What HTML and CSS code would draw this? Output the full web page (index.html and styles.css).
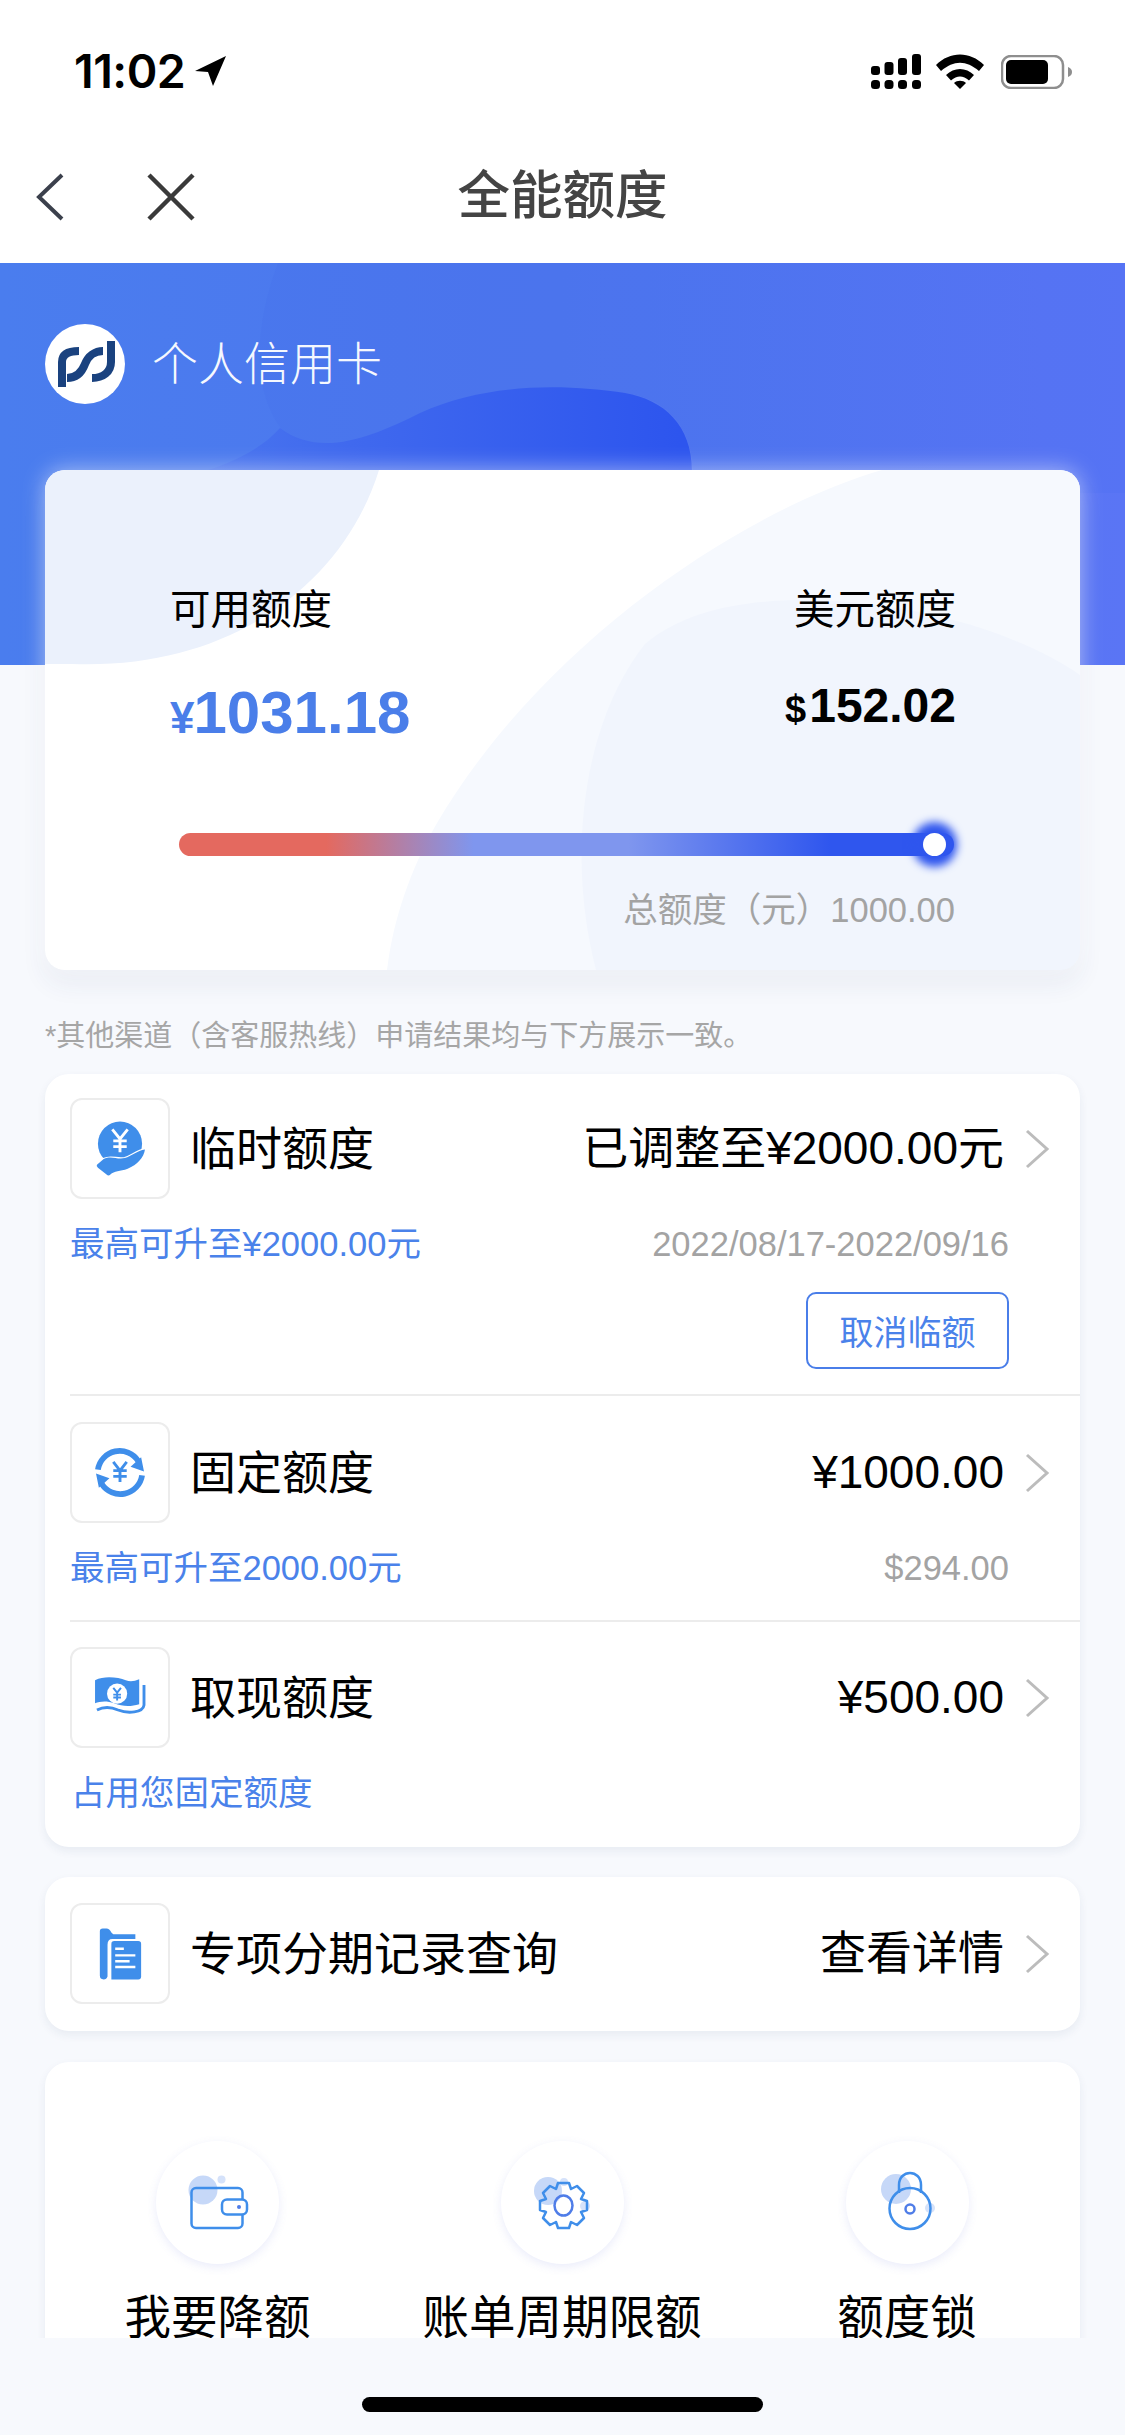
FILE: index.html
```html
<!DOCTYPE html>
<html lang="zh-CN">
<head>
<meta charset="utf-8">
<title>全能额度</title>
<link rel="stylesheet" href="styles.css">
</head>
<body>
<div class="phone">
  <header class="topbar">
    <div class="status">
      <div class="clock"><span>11:02</span>
        <svg class="loc" viewBox="0 0 31 30"><path d="M31 0 L0 15 L13 16 L18 30 Z" fill="#000"/></svg>
      </div>
      <div class="status-icons">
        <svg class="signal" viewBox="0 0 50 35" fill="#000">
          <rect x="0" y="12" width="9" height="9" rx="3"/><rect x="13.5" y="8" width="9" height="13" rx="3"/><rect x="27" y="4" width="9" height="17" rx="3"/><rect x="41" y="0" width="9" height="21" rx="3"/>
          <rect x="0" y="26" width="9" height="9" rx="3.5"/><rect x="13.5" y="26" width="9" height="9" rx="3.5"/><rect x="27" y="26" width="9" height="9" rx="3.5"/><rect x="41" y="26" width="9" height="9" rx="3.5"/>
        </svg>
        <svg class="wifi" viewBox="0 0 48 35" fill="#000">
          <path d="M0 11 C14 -3 34 -3 48 11 L43 17 C30 6 18 6 5 17 Z"/><path d="M10 21 C18 13 30 13 38 21 L33 26.500 C27 21 21 21 15 26.500 Z"/><path d="M18 29 C21 26 27 26 30 29 L24 35 Z"/>
        </svg>
        <svg class="battery" viewBox="0 0 71 34">
          <rect x="1" y="1" width="61" height="32" rx="9" fill="none" stroke="#8e8e8e" stroke-width="2.500"/>
          <rect x="5" y="5" width="42" height="24" rx="5" fill="#000"/>
          <path d="M67 12 C70 13 71 15 71 17 C71 19 70 21 67 22 Z" fill="#8e8e8e"/>
        </svg>
      </div>
    </div>
    <nav class="nav">
      <svg class="nav-back" viewBox="0 0 28 48"><path d="M26 2 L3 24 L26 46" fill="none" stroke="#3b404c" stroke-width="4"/></svg>
      <svg class="nav-close" viewBox="0 0 48 48"><path d="M2 2 L46 46 M46 2 L2 46" fill="none" stroke="#3a3a3a" stroke-width="4.500"/></svg>
      <h1 class="nav-title">全能额度</h1>
    </nav>
  </header>

  <main class="scroll">
    <section class="hero">
      <svg class="hero-waves" viewBox="0 0 1125 402" preserveAspectRatio="none">
        <defs>
          <linearGradient id="wave" gradientUnits="userSpaceOnUse" x1="80" x2="680" y1="0" y2="0">
            <stop offset="0" stop-color="#4670ee" stop-opacity="0"/>
            <stop offset=".45" stop-color="#4069ee"/>
            <stop offset="1" stop-color="#2d55ee"/>
          </linearGradient>
        </defs>
        <path d="M278 0 C255 60 250 130 285 170 C320 195 370 175 420 150 C490 118 570 125 625 130 C670 135 700 170 692 230 L1125 230 L1125 0 Z" fill="#3f60ee" fill-opacity=".1"/>
        <path d="M60 230 C150 225 240 210 280 165 C320 195 370 175 420 150 C490 118 570 122 625 130 C670 138 700 170 690 230 Z" fill="url(#wave)"/>
      </svg>
      <div class="brand">
        <span class="logo">
          <svg viewBox="0 0 80 80">
            <g fill="none" stroke="#1a427f" stroke-width="8">
              <path d="M17 63 V38 C17 30 24 27 34 27"/>
              <path d="M22 54 C32 54 37 48 40 40 C43 32 50 27 58 27"/>
              <path d="M66 17 V38 C66 48 58 54 47 54"/>
            </g>
          </svg>
        </span>
        <span class="brand-name">个人信用卡</span>
      </div>
      <div class="limit-card">
        <svg class="limit-bg" viewBox="0 0 1035 500">
          <path d="M0 0 H334 C300 110 190 200 27 194 H0 Z" fill="#ebf1fc"/>
          <path d="M837 0 C700 40 500 170 392 353 C365 400 348 450 342 500 H1035 V0 Z" fill="#f6f9fe"/>
          <path d="M551 500 C520 380 540 250 600 174 C640 140 700 130 760 130 C860 130 970 160 1035 205 V500 Z" fill="#f1f5fd"/>
        </svg>
        <div class="limit-top">
          <div class="limit-col">
            <span class="limit-label">可用额度</span>
            <span class="limit-cny"><small>¥</small>1031.18</span>
          </div>
          <div class="limit-col limit-col-right">
            <span class="limit-label">美元额度</span>
            <span class="limit-usd"><small>$</small>152.02</span>
          </div>
        </div>
        <div class="slider"><span class="knob"></span></div>
        <p class="limit-total">总额度（元）1000.00</p>
      </div>
    </section>

    <p class="note">*其他渠道（含客服热线）申请结果均与下方展示一致。</p>

    <section class="panel">
      <div class="row">
        <div class="row-main">
          <span class="icon-box">
            <svg viewBox="0 0 100 100">
              <circle cx="50" cy="45" r="23" fill="#3f8eea"/>
              <path d="M42 30 L50 40 L58 30 M50 40 V54 M43 42 H57 M43 48 H57" fill="none" stroke="#fff" stroke-width="3"/>
              <path d="M26 67 L33 61 C41 57 47 62 55 60 C62 58 68 52 76 51 C75 59 68 67 58 71 C50 74 44 73 40 77 Q38 79 36 77 L27 70 Q25 68 26 67 Z" fill="#3f8eea" stroke="#fff" stroke-width="2.500" paint-order="stroke"/>
            </svg>
          </span>
          <span class="row-title">临时额度</span>
          <span class="row-value">已调整至¥2000.00元</span>
          <svg class="chev" viewBox="0 0 26 40"><path d="M3 2 L23 20 L3 38" fill="none" stroke="#bcbcbc" stroke-width="3"/></svg>
        </div>
        <div class="row-sub"><span class="sub-blue">最高可升至¥2000.00元</span><span class="sub-gray">2022/08/17-2022/09/16</span></div>
        <div class="row-action"><button class="btn-outline" type="button">取消临额</button></div>
      </div>
      <div class="row row-mid">
        <div class="row-main">
          <span class="icon-box">
            <svg viewBox="0 0 100 100">
              <g fill="none" stroke="#3f8eea" stroke-width="6">
                <path d="M27 47 A23 23 0 0 1 69 38"/>
                <path d="M73 53 A23 23 0 0 1 31 62"/>
              </g>
              <path d="M61 44 L75 49 L72 34 Z M39 56 L25 51 L28 66 Z" fill="#3f8eea"/>
              <path d="M43 39 L50 48 L57 39 M50 48 V60 M43 48 H57 M43 54 H57" fill="none" stroke="#3f8eea" stroke-width="3"/>
            </svg>
          </span>
          <span class="row-title">固定额度</span>
          <span class="row-value">¥1000.00</span>
          <svg class="chev" viewBox="0 0 26 40"><path d="M3 2 L23 20 L3 38" fill="none" stroke="#bcbcbc" stroke-width="3"/></svg>
        </div>
        <div class="row-sub"><span class="sub-blue">最高可升至2000.00元</span><span class="sub-gray">$294.00</span></div>
      </div>
      <div class="row row-last">
        <div class="row-main">
          <span class="icon-box">
            <svg viewBox="0 0 100 100">
              <path d="M24 32 C34 27 48 29 56 32 C61 34 65 33 70 31 V57 C60 60 52 59 44 56 C36 53 29 54 24 56 Z" fill="#3f8eea"/>
              <circle cx="47" cy="46" r="10.500" fill="#fff"/>
              <path d="M43 40 L47 45 L51 40 M47 45 V53 M43 47 H51 M43 50 H51" fill="none" stroke="#3f8eea" stroke-width="2"/>
              <path d="M26 63 C34 59 41 60 48 63 C58 67 74 66 75 58 V37" fill="none" stroke="#3f8eea" stroke-width="3"/>
            </svg>
          </span>
          <span class="row-title">取现额度</span>
          <span class="row-value">¥500.00</span>
          <svg class="chev" viewBox="0 0 26 40"><path d="M3 2 L23 20 L3 38" fill="none" stroke="#bcbcbc" stroke-width="3"/></svg>
        </div>
        <div class="row-sub row-sub-inset"><span class="sub-blue">占用您固定额度</span></div>
      </div>
    </section>

    <section class="panel panel-single">
      <div class="row-main">
        <span class="icon-box">
          <svg viewBox="0 0 100 100">
            <path d="M29 27 Q29 24 32 24 H36 Q39 24 41 28 L43 30 H66 V35 H42 Q37 35 37 41 V74 Q36 77 33 77 Q29 77 29 73 Z" fill="#3f8eea"/>
            <path d="M41 40 Q41 37 44 37 H69 Q72 37 72 40 V74 Q72 77 69 77 H41 Z" fill="#3f8eea"/>
            <path d="M45 45 H54 M45 52 H66 M45 58 H60 M45 64 H66" stroke="#fff" stroke-width="2.500" fill="none"/>
          </svg>
        </span>
        <span class="row-title">专项分期记录查询</span>
        <span class="row-value">查看详情</span>
        <svg class="chev" viewBox="0 0 26 40"><path d="M3 2 L23 20 L3 38" fill="none" stroke="#bcbcbc" stroke-width="3"/></svg>
      </div>
    </section>

    <section class="panel panel-tools">
      <div class="tool">
        <span class="tool-circle">
          <svg viewBox="0 0 123 123">
            <circle cx="47" cy="49" r="14.500" fill="#c6d8f8"/><circle cx="65.500" cy="38.500" r="4" fill="#d5e2fa"/>
            <rect x="35.500" y="47" width="51" height="40" rx="4.500" fill="none" stroke="#3f8eea" stroke-width="2.500"/>
            <rect x="66" y="58.500" width="25" height="15" rx="5" fill="#fff" stroke="#3f8eea" stroke-width="2.500"/>
            <circle cx="83" cy="66" r="2" fill="#4f7de8"/>
          </svg>
        </span>
        <span class="tool-name">我要降额</span>
      </div>
      <div class="tool">
        <span class="tool-circle">
          <svg viewBox="0 0 123 123">
            <circle cx="47" cy="50" r="14" fill="#c6d8f8"/><circle cx="63" cy="41" r="4" fill="#d5e2fa"/><circle cx="84" cy="65" r="5" fill="#d5e2fa"/>
            <path d="M57 42 L68 42 L70 48 L76 45 L83 52 L80 58 L86 60 L86 69 L80 71 L83 77 L76 84 L70 81 L68 87 L57 87 L55 81 L49 84 L42 77 L45 71 L39 69 L39 60 L45 58 L42 52 L49 45 L55 48 Z" fill="none" stroke="#3f8eea" stroke-width="2.500" stroke-linejoin="round"/>
            <ellipse cx="62.500" cy="64.500" rx="9" ry="10" fill="none" stroke="#4f7de8" stroke-width="2.500"/>
          </svg>
        </span>
        <span class="tool-name">账单周期限额</span>
      </div>
      <div class="tool">
        <span class="tool-circle">
          <svg viewBox="0 0 123 123">
            <circle cx="50" cy="48" r="15" fill="#c6d8f8"/><circle cx="84" cy="67" r="5" fill="#d5e2fa"/>
            <path d="M53 52 V44 C53 28 75 28 75 44 V52" fill="none" stroke="#3f8eea" stroke-width="2.500"/>
            <circle cx="64" cy="67.500" r="20.500" fill="none" stroke="#3f8eea" stroke-width="2.500"/>
            <circle cx="64" cy="68" r="4.500" fill="none" stroke="#4f7de8" stroke-width="2.500"/>
          </svg>
        </span>
        <span class="tool-name">额度锁</span>
      </div>
    </section>
  </main>

  <footer class="home"><span class="home-bar"></span></footer>
</div>
</body>
</html>
```
FILE: styles.css
```css
* { box-sizing: border-box; }
html, body { margin: 0; padding: 0; }
body {
  width: 1125px;
  height: 2435px;
  overflow: hidden;
  font-family: "Liberation Sans", "Noto Sans CJK SC", sans-serif;
  background: #f7f9fd;
  color: #000;
}
svg { display: block; }
.phone { width: 1125px; height: 2435px; display: flex; flex-direction: column; }

/* top */
.topbar { height: 263px; background: #fff; flex: none; }
.status {
  height: 134px;
  padding: 49px 53px 0 74px;
  display: flex;
  justify-content: space-between;
  align-items: flex-start;
}
.clock { display: flex; align-items: center; gap: 10px; height: 44px; font-family: Inter, "Liberation Sans", sans-serif; font-size: 46.500px; font-weight: 600; letter-spacing: -.5px; line-height: 44px; }
.loc { width: 31px; height: 30px; }
.status-icons { display: flex; align-items: center; gap: 15px; padding-top: 5px; }
.signal { width: 50px; height: 35px; }
.wifi { width: 48px; height: 35px; }
.battery { width: 71px; height: 34px; margin-left: 2px; }

.nav { height: 129px; position: relative; display: flex; align-items: center; padding: 0 0 4px 36px; }
.nav-back { width: 28px; height: 48px; }
.nav-close { width: 48px; height: 48px; margin-left: 83px; }
.nav-title {
  position: absolute;
  left: 0; right: 0; top: 32px;
  margin: 0;
  text-align: center;
  font-size: 52.500px;
  line-height: 60px;
  font-weight: 500;
  color: #444;
}

/* scroll region */
.scroll { height: 2075px; flex: none; overflow: hidden; }

/* hero */
.hero {
  position: relative;
  height: 707px;
  padding: 60px 45px 0;
  background: linear-gradient(90deg, #4a7dee 0%, #4d76ee 50%, #5a75f5 100%) no-repeat 0 0 / 100% 402px;
}
.hero-waves { position: absolute; left: 0; top: 0; width: 1125px; height: 402px; }
.brand { position: relative; display: flex; align-items: center; gap: 27px; height: 81px; }
.logo { width: 80px; height: 80px; border-radius: 50%; background: #fff; display: block; }
.logo svg { width: 80px; height: 80px; }
.brand-name { color: #fff; font-size: 46px; font-weight: 300; line-height: 60px; opacity: .95; }

.limit-card {
  position: relative;
  margin-top: 66px;
  height: 500px;
  border-radius: 20px;
  overflow: hidden;
  background: #fff;
}
.hero::after {
  content: "";
  position: absolute;
  left: 45px; top: 207px;
  width: 1035px; height: 500px;
  border-radius: 20px;
  box-shadow: 0 0 22px rgba(255,255,255,.55), 0 14px 26px rgba(40,60,110,.07);
  pointer-events: none;
}
.limit-bg { position: absolute; left: 0; top: 0; width: 1035px; height: 500px; }
.limit-top {
  position: relative;
  display: flex;
  justify-content: space-between;
  padding: 115px 124px 0 125px;
  height: 363px;
}
.limit-col { display: flex; flex-direction: column; }
.limit-col-right { align-items: flex-end; }
.limit-label { font-size: 40.500px; line-height: 50px; }
.limit-cny { margin-top: 43px; font-size: 60px; line-height: 70px; font-weight: 700; color: #4a7ee9; white-space: nowrap; }
.limit-cny small { font-size: 44px; margin-right: -1px; }
.limit-usd { margin-top: 41px; font-size: 48px; line-height: 60px; font-weight: 700; white-space: nowrap; }
.limit-usd small { font-size: 38px; margin-right: 3px; }

.slider {
  position: relative;
  margin: 0 126px 0 134px;
  height: 23px;
  border-radius: 12px;
  background: linear-gradient(90deg, #e4695f 0%, #e4695f 19%, #7f96ee 38%, #7f96ee 58%, #2f56ee 84%, #2f56ee 100%);
}
.knob {
  position: absolute;
  right: 8px; top: 0;
  width: 23px; height: 23px;
  border-radius: 50%;
  background: #fff;
  box-shadow: 0 0 8px 11px #2f56ee;
}
.limit-total { position: relative; margin: 32px 125px 0 0; text-align: right; font-size: 34.500px; line-height: 44px; color: #a3a3a3; }

.note { margin: 46px 0 0; padding: 0 0 0 45px; height: 40px; font-size: 29px; line-height: 40px; color: #a6a6a6; }

/* panels */
.panel {
  margin: 18px 45px 0;
  background: #fff;
  border-radius: 24px;
  box-shadow: 0 4px 10px rgba(30,50,100,.07);
}
.panel-single { margin-top: 30px; padding: 26px 0 27px; }
.row { padding: 24px 0 0; border-bottom: 2px solid #ececec; margin-left: 25px; margin-right: 0; }
.row .row-main { padding-left: 0; }
.row-mid { padding: 26px 0 31px; }
.row-last { padding: 25px 0 33px; border-bottom: 0; }
.row-main { display: flex; align-items: center; height: 101px; padding: 0 30px 0 25px; }
.row .row-main { padding-right: 30px; }
.icon-box {
  width: 100px; height: 101px;
  flex: none;
  border: 2px solid #ececec;
  border-radius: 12px;
  display: block;
}
.icon-box svg { width: 96px; height: 97px; }
.row-title { margin-left: 20px; font-size: 46px; line-height: 60px; }
.row-value { margin-left: auto; margin-bottom: 2px; font-size: 46px; line-height: 60px; }
.chev { width: 26px; height: 40px; margin-left: 20px; flex: none; }
.row-sub { display: flex; justify-content: space-between; margin-top: 25px; padding-right: 71px; height: 40px; font-size: 34.500px; line-height: 40px; }
.row-mid .row-sub, .row-last .row-sub { margin-bottom: 1px; }
.row-sub-inset { padding-left: 1px; }
.sub-blue { color: #4a82ea; }
.sub-gray { color: #a3a3a3; }
.row-action { display: flex; justify-content: flex-end; margin-top: 28px; padding: 0 71px 25px 0; }
.btn-outline {
  width: 203px; height: 77px;
  background: #fff;
  border: 2px solid #4a7ee9;
  border-radius: 10px;
  color: #4a82ea;
  font: inherit;
  font-size: 34px;
  padding: 0;
}

.panel-tools {
  margin-top: 31px;
  height: 320px;
  display: grid;
  grid-template-columns: 345px 344px 346px;
  padding-top: 79px;
  justify-items: center;
  align-items: start;
  border-radius: 24px;
}
.tool { display: flex; flex-direction: column; align-items: center; }
.tool-circle {
  width: 123px; height: 123px;
  border-radius: 50%;
  background: #fff;
  box-shadow: 0 3px 10px rgba(90,110,220,.13);
  display: block;
}
.tool-circle svg { width: 123px; height: 123px; }
.tool-name { margin-top: 24px; font-size: 46.500px; line-height: 60px; white-space: nowrap; }

/* home indicator */
.home { flex: 1; display: flex; justify-content: center; padding-top: 59px; background: #f7f9fd; }
.home-bar { width: 401px; height: 15px; border-radius: 8px; background: #000; }
```
